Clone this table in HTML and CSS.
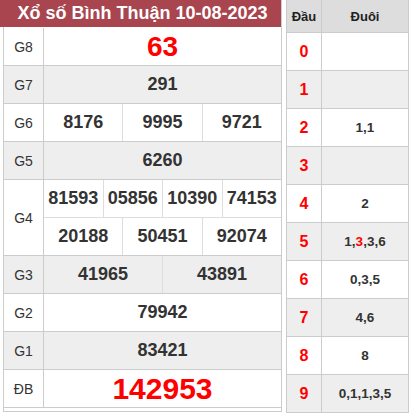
FILE: index.html
```html
<!DOCTYPE html>
<html lang="vi">
<head>
<meta charset="utf-8">
<title>Xổ số Bình Thuận 10-08-2023</title>
<link rel="stylesheet" href="styles.css">
</head>
<body>
<div class="page">
  <div class="kq">
    <div class="title">Xổ số Bình Thuận 10-08-2023</div>
    <div class="row"><div class="lbl">G8</div><div class="vals"><span class="num big">63</span></div></div>
    <div class="row alt"><div class="lbl">G7</div><div class="vals"><span class="num">291</span></div></div>
    <div class="row"><div class="lbl">G6</div><div class="vals"><span class="num">8176</span><span class="num">9995</span><span class="num">9721</span></div></div>
    <div class="row alt"><div class="lbl">G5</div><div class="vals"><span class="num">6260</span></div></div>
    <div class="row tall">
      <div class="lbl">G4</div>
      <div class="stack">
        <div class="vals sub"><span class="num">81593</span><span class="num">05856</span><span class="num">10390</span><span class="num">74153</span></div>
        <div class="vals"><span class="num">20188</span><span class="num">50451</span><span class="num">92074</span></div>
      </div>
    </div>
    <div class="row alt"><div class="lbl">G3</div><div class="vals"><span class="num">41965</span><span class="num">43891</span></div></div>
    <div class="row"><div class="lbl">G2</div><div class="vals"><span class="num">79942</span></div></div>
    <div class="row alt"><div class="lbl">G1</div><div class="vals"><span class="num">83421</span></div></div>
    <div class="row"><div class="lbl">ĐB</div><div class="vals"><span class="num db">142953</span></div></div>
  </div>

  <div class="loto">
    <div class="lrow head"><div class="dau">Đầu</div><div class="duoi">Đuôi</div></div>
    <div class="lrow"><div class="dau">0</div><div class="duoi"></div></div>
    <div class="lrow alt"><div class="dau">1</div><div class="duoi"></div></div>
    <div class="lrow"><div class="dau">2</div><div class="duoi">1,1</div></div>
    <div class="lrow alt"><div class="dau">3</div><div class="duoi"></div></div>
    <div class="lrow"><div class="dau">4</div><div class="duoi">2</div></div>
    <div class="lrow alt"><div class="dau">5</div><div class="duoi">1,<span class="hl">3</span>,3,6</div></div>
    <div class="lrow"><div class="dau">6</div><div class="duoi">0,3,5</div></div>
    <div class="lrow alt"><div class="dau">7</div><div class="duoi">4,6</div></div>
    <div class="lrow"><div class="dau">8</div><div class="duoi">8</div></div>
    <div class="lrow alt"><div class="dau">9</div><div class="duoi">0,1,1,3,5</div></div>
  </div>
</div>
</body>
</html>
```

FILE: styles.css
```css
* { box-sizing: border-box; }

body {
  margin: 0;
  background: #fff;
  font-family: "Liberation Sans", Arial, sans-serif;
  color: #333;
}

.page {
  display: flex;
  align-items: flex-start;
  gap: 4px;
  padding-left: 3px;
}

/* Left results table */
.kq {
  width: 279px;
  border: 1px solid #ccc;
  border-top: 0;
  padding-bottom: 3px;
}

.title {
  height: 27px;
  margin: 0 0 1px -4px;
  padding-left: 4px;
  background: #a8454f;
  color: #fff;
  font-weight: bold;
  font-size: 18px;
  line-height: 26px;
  text-align: center;
  white-space: nowrap;
}

.row {
  display: flex;
  height: 38px;
  border-bottom: 1px solid #ccc;
  background: #fff;
}
.row.alt { background: #eee; }
.row.tall { height: 76px; }

.lbl {
  flex: none;
  width: 40px;
  border-right: 1px solid #ccc;
  display: flex;
  align-items: center;
  justify-content: center;
  font-size: 14px;
  color: #333;
}

.stack {
  flex: 1;
  display: flex;
  flex-direction: column;
}

.vals {
  flex: 1;
  display: flex;
}
.vals.sub { border-bottom: 1px solid #ddd; }

.num {
  flex: 1 1 0;
  display: flex;
  align-items: center;
  justify-content: center;
  font-weight: bold;
  font-size: 18px;
  color: #333;
}
.num + .num { border-left: 1px solid #ddd; }

.num.big { font-size: 28px; color: #f00; }
.num.db { font-size: 30px; color: #f00; }

/* Right loto table */
.loto {
  width: 123px;
  border-left: 1px solid #ccc;
  border-right: 1px solid #ccc;
}

.lrow {
  display: flex;
  height: 38px;
  border-bottom: 1px solid #ccc;
  background: #fff;
}
.lrow.alt { background: #eee; }

.lrow.head {
  height: 33px;
  background: #ddd;
}

.dau {
  flex: none;
  width: 35px;
  border-right: 1px solid #ccc;
  display: flex;
  align-items: center;
  justify-content: center;
  font-weight: bold;
  font-size: 16px;
  color: #f00;
}

.duoi {
  flex: 1;
  display: flex;
  align-items: center;
  justify-content: center;
  font-weight: bold;
  font-size: 13.5px;
  color: #333;
}

.head .dau,
.head .duoi {
  font-size: 13px;
  color: #222;
}

.hl { color: #f00; }
```
